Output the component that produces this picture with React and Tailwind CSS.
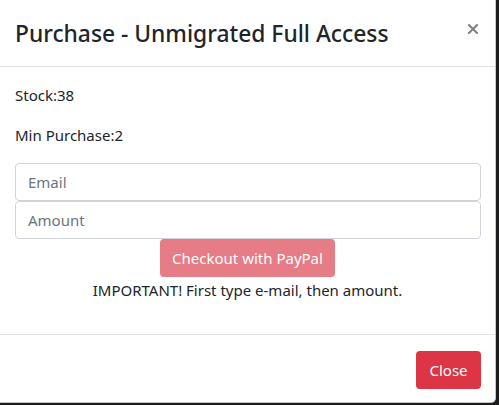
export default function App() {
  return (
    <div
      className="w-[499px] h-[405px] bg-[#1c1c1c] overflow-hidden"
      style={{ fontFamily: '"Segoe UI", "Noto Sans", "Open Sans", sans-serif' }}
    >
      <div className="w-[496px] h-[403px] bg-white border-r border-b border-[#c8c8c8] rounded-br-[5px] flex flex-col text-[#212529]">
        {/* header */}
        <div className="h-[67px] shrink-0 flex items-center justify-between pl-[15px] pr-[17px] border-b border-[#dee2e6]">
          <h4 className="text-[22.8px] leading-[36px] font-medium mt-[1px]">
            Purchase - Unmigrated Full Access
          </h4>
          <button className="-mt-[9px]" aria-label="Close">
            <svg width="10" height="10" viewBox="0 0 10 10">
              <path
                d="M1 1 L9 9 M9 1 L1 9"
                stroke="#7f7f7f"
                strokeWidth="2"
                strokeLinecap="square"
              />
            </svg>
          </button>
        </div>

        {/* body */}
        <div className="px-[15px] pt-[16px] text-[15px] leading-[24px]">
          <p className="mb-4">Stock:38</p>
          <p className="mb-4">Min Purchase:2</p>
          <input
            type="text"
            placeholder="Email"
            className="block w-[466px] h-[38px] px-3 border border-[#ced4da] rounded-[4px] text-[15px] placeholder:text-[#6c757d] outline-none"
          />
          <input
            type="text"
            placeholder="Amount"
            className="block w-[466px] h-[38px] px-3 border border-[#ced4da] rounded-[4px] text-[15px] placeholder:text-[#6c757d] outline-none"
          />
          <div className="flex justify-center">
            <button className="h-[38px] w-[175px] bg-[#e67c86] text-white rounded-[4px] text-[15px]">
              Checkout with PayPal
            </button>
          </div>
          <p className="text-center mt-[1px] mb-4 pb-4">
            IMPORTANT! First type e-mail, then amount.
          </p>
        </div>

        {/* footer */}
        <div className="flex-1 border-t border-[#dee2e6] flex justify-end items-start pt-[16px] pr-[14px]">
          <button className="h-[38px] w-[65px] bg-[#dc3545] text-white rounded-[4px] text-[15px]">
            Close
          </button>
        </div>
      </div>
    </div>
  );
}
